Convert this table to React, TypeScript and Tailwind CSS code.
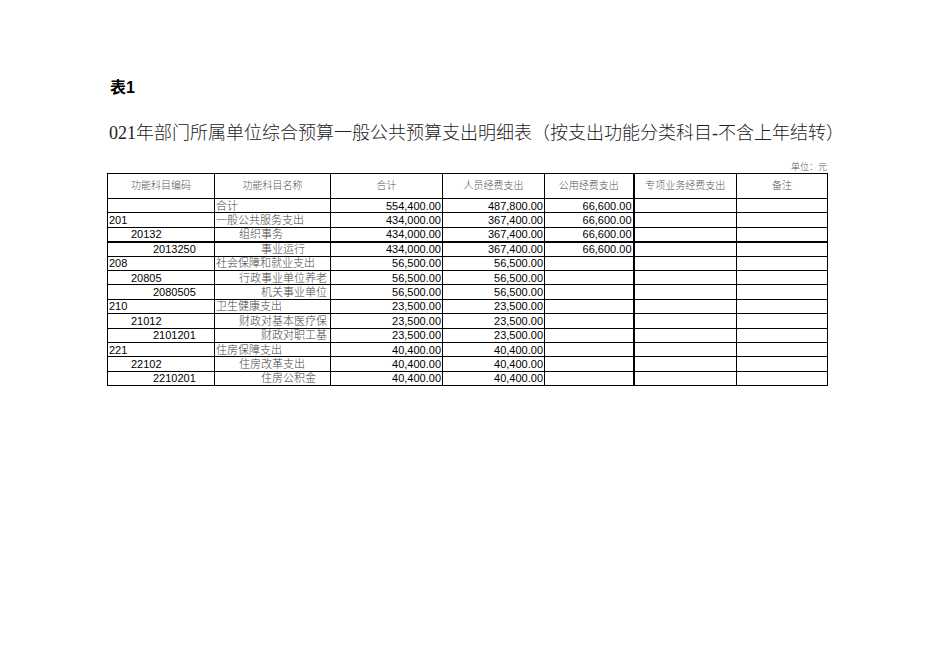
import React from "react";

type Row = {
  code: string;
  codeLevel: number;
  name: string;
  nameLevel: number;
  total: string;
  staff: string;
  pub: string;
  thickTop?: boolean;
};

const rows: Row[] = [
  { code: "", codeLevel: 0, name: "合计", nameLevel: 0, total: "554,400.00", staff: "487,800.00", pub: "66,600.00" },
  { code: "201", codeLevel: 0, name: "一般公共服务支出", nameLevel: 0, total: "434,000.00", staff: "367,400.00", pub: "66,600.00" },
  { code: "20132", codeLevel: 1, name: "组织事务", nameLevel: 1, total: "434,000.00", staff: "367,400.00", pub: "66,600.00" },
  { code: "2013250", codeLevel: 2, name: "事业运行", nameLevel: 2, total: "434,000.00", staff: "367,400.00", pub: "66,600.00", thickTop: true },
  { code: "208", codeLevel: 0, name: "社会保障和就业支出", nameLevel: 0, total: "56,500.00", staff: "56,500.00", pub: "" },
  { code: "20805", codeLevel: 1, name: "行政事业单位养老", nameLevel: 1, total: "56,500.00", staff: "56,500.00", pub: "" },
  { code: "2080505", codeLevel: 2, name: "机关事业单位", nameLevel: 2, total: "56,500.00", staff: "56,500.00", pub: "" },
  { code: "210", codeLevel: 0, name: "卫生健康支出", nameLevel: 0, total: "23,500.00", staff: "23,500.00", pub: "" },
  { code: "21012", codeLevel: 1, name: "财政对基本医疗保", nameLevel: 1, total: "23,500.00", staff: "23,500.00", pub: "" },
  { code: "2101201", codeLevel: 2, name: "财政对职工基", nameLevel: 2, total: "23,500.00", staff: "23,500.00", pub: "" },
  { code: "221", codeLevel: 0, name: "住房保障支出", nameLevel: 0, total: "40,400.00", staff: "40,400.00", pub: "" },
  { code: "22102", codeLevel: 1, name: "住房改革支出", nameLevel: 1, total: "40,400.00", staff: "40,400.00", pub: "" },
  { code: "2210201", codeLevel: 2, name: "住房公积金", nameLevel: 2, total: "40,400.00", staff: "40,400.00", pub: "" },
];

const codePad = ["pl-[1px]", "pl-[23px]", "pl-[45px]"];
const namePad = ["pl-[1px]", "pl-[24px]", "pl-[46px]"];

const serif = "font-['Liberation_Serif','Noto_Sans_CJK_SC',serif]";
const sans = "font-['Liberation_Sans','Noto_Sans_CJK_SC',sans-serif]";

export default function App() {
  return (
    <div className="w-[936px] h-[662px] bg-white overflow-hidden">
      <div className="pl-[107px] pt-[78px]">
        <div className={`${sans} text-[16px] leading-[20px] font-bold text-black pl-[3px]`}>表1</div>
        <div className={`${serif} mt-[24px] text-[18px] leading-[22px] font-light text-[#222] pl-[2px] whitespace-nowrap`}>
          021年部门所属单位综合预算一般公共预算支出明细表（按支出功能分类科目-不含上年结转）
        </div>
        <div className={`${serif} w-[721px] mt-[18px] text-right text-[9px] leading-[11px] font-light text-[#555] pr-[1px]`}>
          单位：元
        </div>
        <table className="table-fixed border-collapse w-[721px]">
          <colgroup>
            <col className="w-[107px]" />
            <col className="w-[116px]" />
            <col className="w-[112px]" />
            <col className="w-[102px]" />
            <col className="w-[89px]" />
            <col className="w-[103px]" />
            <col className="w-[91px]" />
          </colgroup>
          <thead>
            <tr className="h-[25px]">
              {["功能科目编码", "功能科目名称", "合计", "人员经费支出", "公用经费支出", "专项业务经费支出", "备注"].map((h, i) => (
                <th
                  key={h}
                  className={`${serif} font-light text-[10px] leading-[12px] text-[#555] text-center p-0 border border-black ${i === 5 ? "border-l-2" : ""}`}
                >
                  {h}
                </th>
              ))}
            </tr>
          </thead>
          <tbody>
            {rows.map((r, idx) => (
              <tr key={idx} className="h-[14.4px]">
                <td className={`${sans} text-[11px] leading-[12px] text-black p-0 ${codePad[r.codeLevel]} border border-black whitespace-nowrap ${r.thickTop ? "border-t-2" : ""}`}>
                  {r.code}
                </td>
                <td className={`${serif} text-[11px] leading-[12px] font-light text-[#444] p-0 ${namePad[r.nameLevel]} border border-black whitespace-nowrap ${r.thickTop ? "border-t-2" : ""}`}>
                  {r.name}
                </td>
                <td className={`${sans} text-[11px] leading-[12px] text-black p-0 pr-[1px] text-right border border-black ${r.thickTop ? "border-t-2" : ""}`}>
                  {r.total}
                </td>
                <td className={`${sans} text-[11px] leading-[12px] text-black p-0 pr-[1px] text-right border border-black ${r.thickTop ? "border-t-2" : ""}`}>
                  {r.staff}
                </td>
                <td className={`${sans} text-[11px] leading-[12px] text-black p-0 pr-[1px] text-right border border-black ${r.thickTop ? "border-t-2" : ""}`}>
                  {r.pub}
                </td>
                <td className={`p-0 border border-black border-l-2 ${r.thickTop ? "border-t-2" : ""}`}></td>
                <td className={`p-0 border border-black ${r.thickTop ? "border-t-2" : ""}`}></td>
              </tr>
            ))}
          </tbody>
        </table>
      </div>
    </div>
  );
}
